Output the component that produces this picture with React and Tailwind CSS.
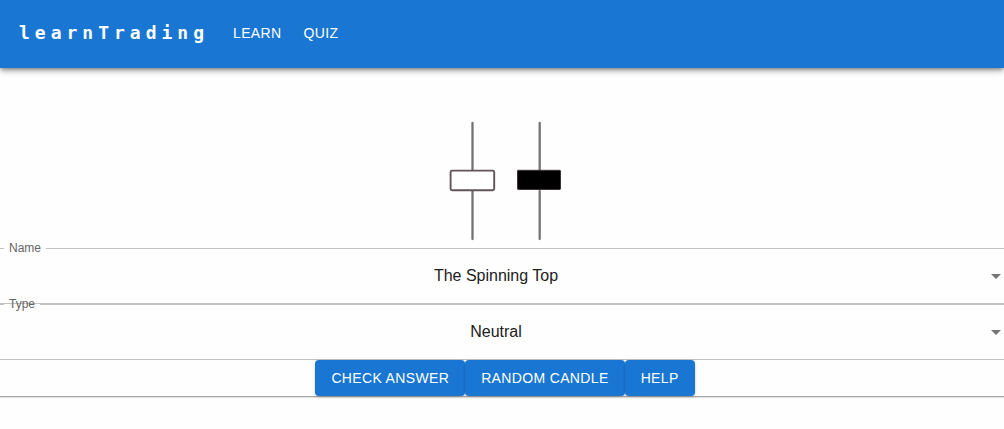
function Candles() {
  return (
    <svg
      className="block h-32 w-[120px]"
      viewBox="0 0 120 128"
      role="img"
      aria-label="Candlestick pattern"
    >
      <g stroke="#757374" strokeWidth="2.3" strokeLinecap="round">
        <path d="M30.5 7V54" />
        <path d="M30.5 75V123" />
        <path d="M97.7 7V54" />
        <path d="M97.7 75V123" />
      </g>
      <rect x="8.6" y="54.6" width="43.6" height="19.6" rx="1.5" fill="#fff" stroke="#62545a" strokeWidth="1.9" />
      <rect x="75.5" y="54.3" width="43" height="19.2" rx="0.8" fill="#000" stroke="#3d3337" strokeWidth="1" />
    </svg>
  );
}

function SelectField({ id, label, value, options }) {
  return (
    <div className="flex flex-col border-b border-[#c2c2c2]">
      <div className="flex h-px">
        <span className="w-1 bg-[#c2c2c2]" />
        <label htmlFor={id} className="z-10 px-[5px] text-xs leading-[1px] text-[#666]">
          {label}
        </label>
        <span className="flex-1 bg-[#c2c2c2]" />
      </div>
      <div className="relative">
        <select
          id={id}
          defaultValue={value}
          className="block h-[54px] w-full appearance-none bg-transparent pr-3 text-center text-base text-[#212121] outline-none [text-align-last:center]"
        >
          {options.map((option) => (
            <option key={option}>{option}</option>
          ))}
        </select>
        <svg
          className="pointer-events-none absolute top-1/2 right-[3px] h-1.5 w-2.5 -translate-y-1/2"
          viewBox="0 0 10 6"
          aria-hidden="true"
        >
          <path d="M0 1l5 5 5-5z" fill="#757575" />
        </svg>
      </div>
    </div>
  );
}

function ActionButton({ children }) {
  return (
    <button
      type="button"
      className="h-9 rounded bg-[#1976d2] px-4 text-sm tracking-wide text-white uppercase shadow-[0_1px_3px_rgba(0,0,0,0.2)]"
    >
      {children}
    </button>
  );
}

export default function App() {
  return (
    <div className="min-h-screen bg-[#fefefe] font-['Liberation_Sans',Arial,sans-serif]">
      <header className="flex h-[68px] items-center bg-[#1976d2] pb-0.5 pl-[19px] text-white shadow-[0_2px_4px_-1px_rgba(0,0,0,0.4),0_4px_5px_rgba(0,0,0,0.14),0_1px_10px_rgba(0,0,0,0.12)]">
        <a
          href="#home"
          className="font-['DejaVu_Sans_Mono',monospace] text-lg font-bold tracking-[5px]"
        >
          learnTrading
        </a>
        <nav className="flex gap-[22px] pl-6 text-sm tracking-wide uppercase">
          <a href="#learn">Learn</a>
          <a href="#quiz">Quiz</a>
        </nav>
      </header>
      <main>
        <div className="flex justify-center pt-12 pb-1">
          <Candles />
        </div>
        <SelectField
          id="candle-name"
          label="Name"
          value="The Spinning Top"
          options={["The Spinning Top", "Hammer", "Doji"]}
        />
        <SelectField
          id="candle-type"
          label="Type"
          value="Neutral"
          options={["Neutral", "Bullish", "Bearish"]}
        />
        <div className="flex justify-center border-b border-[#a6a6a6] pl-1.5 shadow-[0_1px_1px_rgba(0,0,0,0.1)]">
          <ActionButton>Check Answer</ActionButton>
          <ActionButton>Random Candle</ActionButton>
          <ActionButton>Help</ActionButton>
        </div>
      </main>
    </div>
  );
}
